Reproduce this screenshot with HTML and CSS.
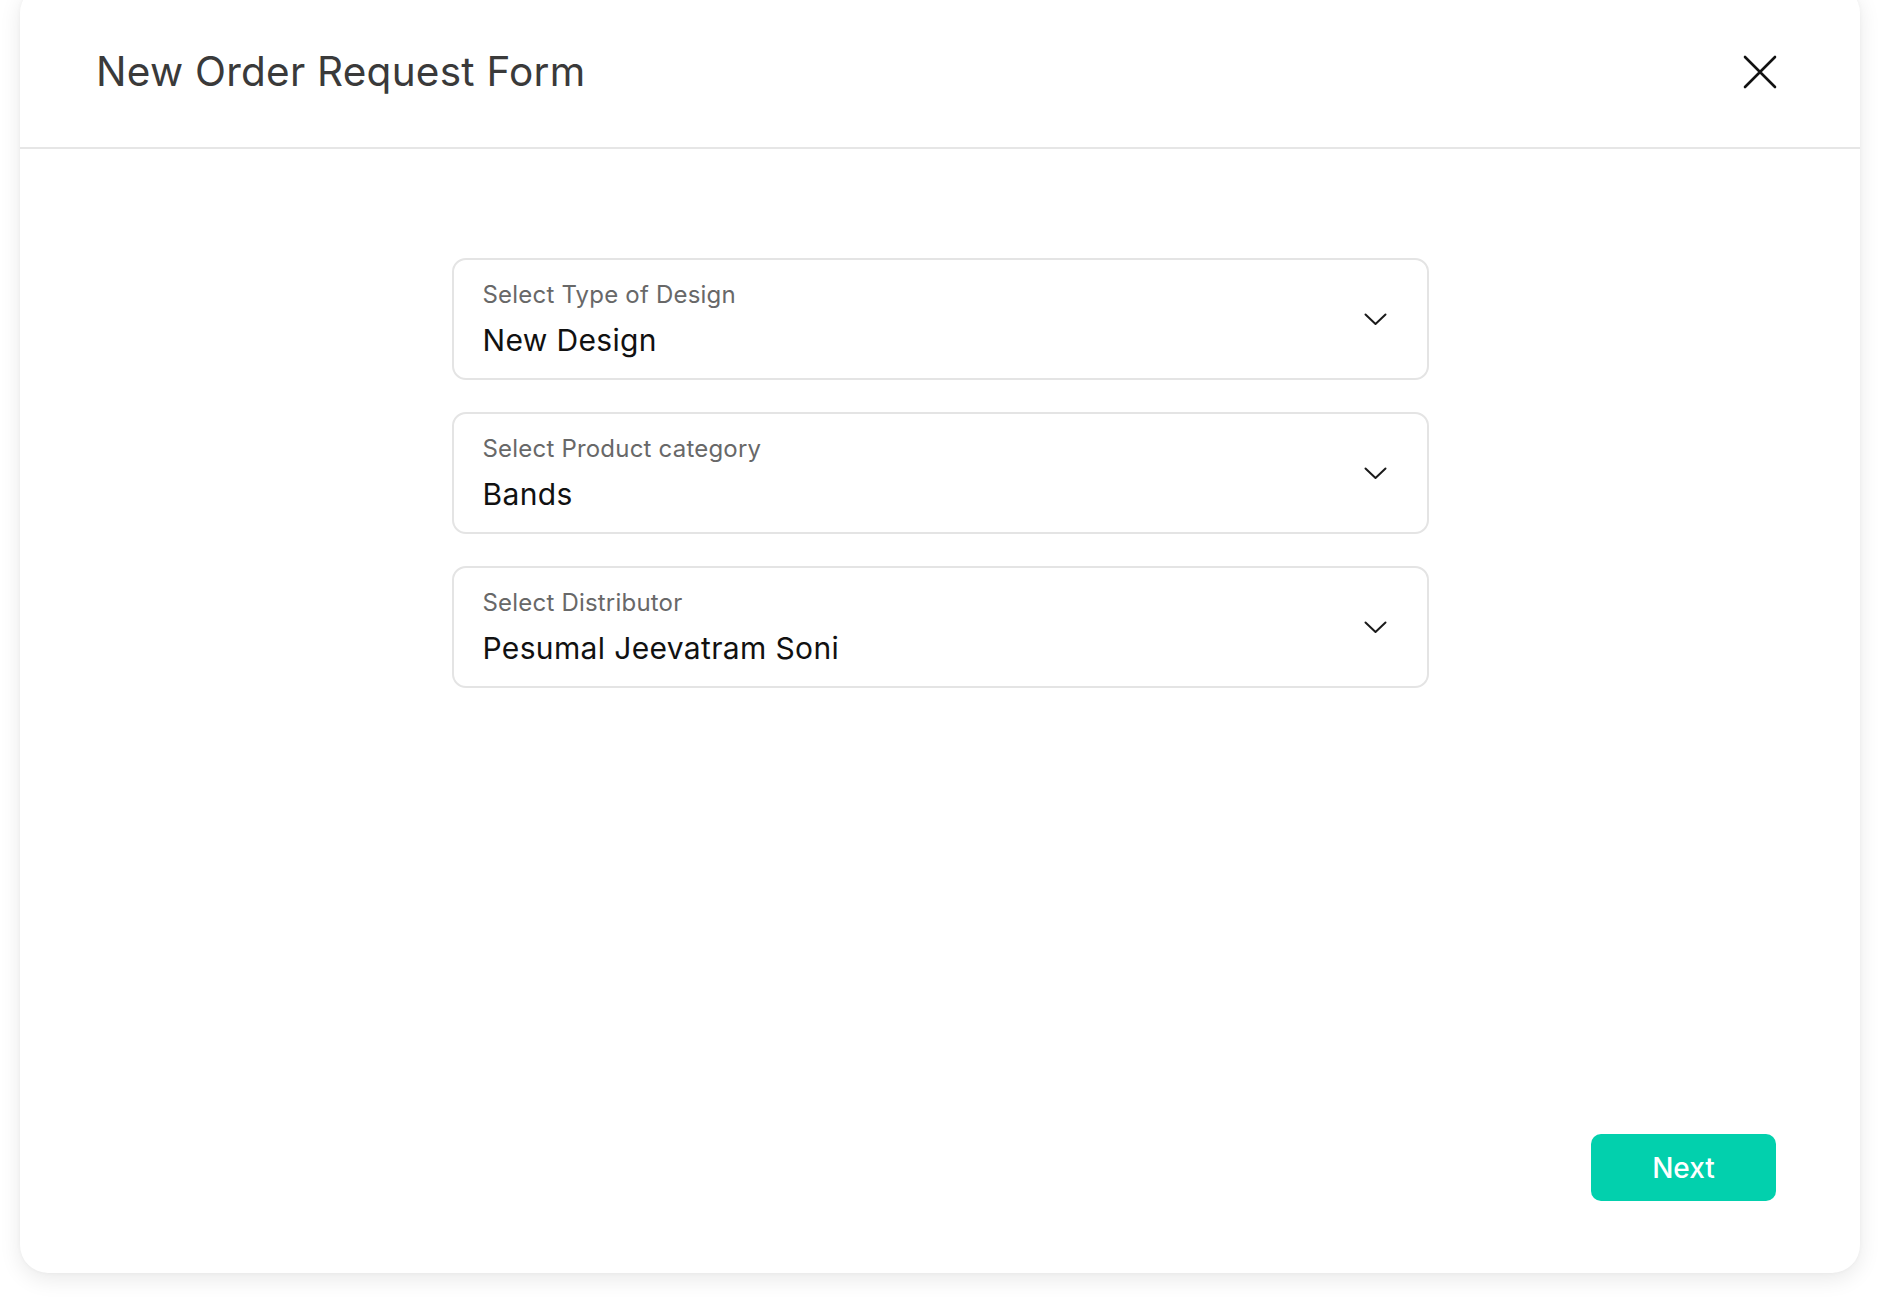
FILE: index.html
```html
<!DOCTYPE html>
<html lang="en">
<head>
<meta charset="utf-8">
<title>New Order Request Form</title>
<link rel="stylesheet" href="styles.css">
</head>
<body>
<div class="modal">
  <header class="modal-header">
    <h1 class="modal-title">New Order Request Form</h1>
    <button class="close-btn" aria-label="Close">
      <svg width="34" height="34" viewBox="0 0 34 34"><path d="M2 2 L32 32 M32 2 L2 32" stroke="#111" stroke-width="2.6" stroke-linecap="round" fill="none"/></svg>
    </button>
  </header>
  <main class="modal-body">
    <div class="fields">
      <div class="field">
        <div class="field-text">
          <div class="field-label">Select Type of Design</div>
          <div class="field-value">New Design</div>
        </div>
        <svg class="chevron" width="23" height="13" viewBox="0 0 23 13"><path d="M1.5 1.5 L11.5 11 L21.5 1.5" stroke="#1a1a1a" stroke-width="2" stroke-linecap="round" stroke-linejoin="round" fill="none"/></svg>
      </div>
      <div class="field">
        <div class="field-text">
          <div class="field-label">Select Product category</div>
          <div class="field-value">Bands</div>
        </div>
        <svg class="chevron" width="23" height="13" viewBox="0 0 23 13"><path d="M1.5 1.5 L11.5 11 L21.5 1.5" stroke="#1a1a1a" stroke-width="2" stroke-linecap="round" stroke-linejoin="round" fill="none"/></svg>
      </div>
      <div class="field">
        <div class="field-text">
          <div class="field-label">Select Distributor</div>
          <div class="field-value">Pesumal Jeevatram Soni</div>
        </div>
        <svg class="chevron" width="23" height="13" viewBox="0 0 23 13"><path d="M1.5 1.5 L11.5 11 L21.5 1.5" stroke="#1a1a1a" stroke-width="2" stroke-linecap="round" stroke-linejoin="round" fill="none"/></svg>
      </div>
    </div>
  </main>
  <footer class="modal-footer">
    <button class="next-btn">Next</button>
  </footer>
</div>
</body>
</html>
```
FILE: styles.css
```css
* { box-sizing: border-box; }
html, body { margin: 0; padding: 0; background: #ffffff; }
body {
  font-family: Inter, "Noto Sans", sans-serif;
  height: 1299px;
  overflow: hidden;
}
.modal {
  margin: -15px 22px 0 20px;
  height: 1288px;
  background: #ffffff;
  border-radius: 28px;
  box-shadow: 0 6px 22px rgba(0, 0, 0, 0.09), 0 0 4px rgba(0, 0, 0, 0.04);
  display: flex;
  flex-direction: column;
}
.modal-header {
  height: 164px;
  padding: 11px 83px 0 76px;
  border-bottom: 2px solid #e6e6e6;
  display: flex;
  align-items: center;
  justify-content: space-between;
}
.modal-title {
  margin: 0;
  font-size: 40.5px;
  font-weight: 400;
  color: #3a3a3a;
  letter-spacing: 0.25px;
}
.close-btn {
  background: none;
  border: 0;
  padding: 0;
  width: 34px;
  height: 34px;
  cursor: pointer;
}
.close-btn svg { display: block; }
.modal-body {
  flex: 1;
  padding-top: 109px;
}
.fields {
  width: 977px;
  margin: 0 auto;
  display: flex;
  flex-direction: column;
  gap: 32px;
}
.field {
  height: 122px;
  border: 2px solid #e4e4e4;
  border-radius: 14px;
  padding: 0 40px 0 29px;
  display: flex;
  align-items: center;
  justify-content: space-between;
}
.field-text {
  display: flex;
  flex-direction: column;
  gap: 10px;
  padding-top: 2px;
}
.field-label {
  font-size: 24px;
  line-height: 30px;
  color: #686868;
  letter-spacing: 0.2px;
}
.field-value {
  font-size: 30px;
  line-height: 40px;
  color: #111111;
  letter-spacing: 0.35px;
}
.chevron { display: block; }
.modal-footer {
  display: flex;
  justify-content: flex-end;
  padding: 0 84px 72px 0;
}
.next-btn {
  width: 185px;
  height: 67px;
  border: 0;
  border-radius: 10px;
  background: #02d0ad;
  color: #ffffff;
  font-family: Inter, "Noto Sans", sans-serif;
  font-size: 28px;
  font-weight: 500;
  cursor: pointer;
}
```
